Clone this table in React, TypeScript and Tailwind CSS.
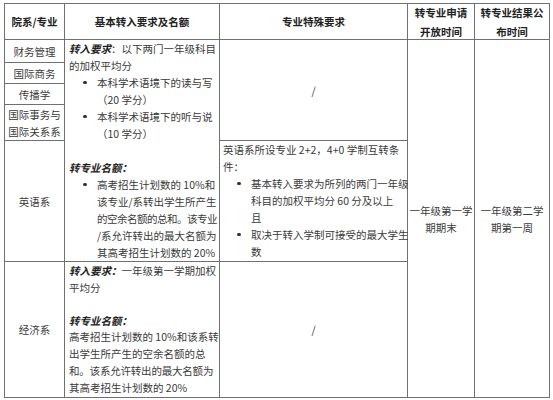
import React from "react";

const B = ({ children }: { children: React.ReactNode }) => (
  <span className="font-bold italic text-[#222]">{children}</span>
);

const L = ({ children, className = "" }: { children: React.ReactNode; className?: string }) => (
  <div className={`whitespace-nowrap h-[17px] ${className}`}>{children}</div>
);

const Bullet = ({ lines }: { lines: React.ReactNode[] }) => (
  <div className="flex pl-[11px]">
    <span className="w-[17px] shrink-0 h-[17px] flex items-center">
      <span className="ml-[3px] w-[3.5px] h-[3.5px] rounded-full bg-[#333]" />
    </span>
    <div>
      {lines.map((l, i) => (
        <L key={i}>{l}</L>
      ))}
    </div>
  </div>
);

const C = "bg-white";
const center = "bg-white flex items-center justify-center text-center";

export default function App() {
  return (
    <div
      className="w-[553px] h-[400px] bg-white pt-[3px] pl-[4px] text-[10.5px] leading-[17px] text-[#3a3a3a]"
      style={{ fontFamily: '"Noto Sans CJK SC", "Liberation Sans", sans-serif' }}
    >
      <div className="grid w-[546px] grid-cols-[59px_154px_187px_66px_74px] grid-rows-[35px_22px_20px_20px_35px_120px_135px] gap-[1px] border border-[#707070] bg-[#707070]">
        {/* header */}
        <div className={`${center} font-bold text-[#222]`}>院系/专业</div>
        <div className={`${center} font-bold text-[#222]`}>基本转入要求及名额</div>
        <div className={`${center} font-bold text-[#222]`}>专业特殊要求</div>
        <div className={`${center} font-bold text-[#222] leading-[19px]`}>
          <div>
            转专业申请
            <br />
            开放时间
          </div>
        </div>
        <div className={`${center} font-bold text-[#222] leading-[19px]`}>
          <div>
            转专业结果公
            <br />
            布时间
          </div>
        </div>

        {/* col1 */}
        <div className={`${center} col-start-1 row-start-2`}>财务管理</div>
        <div className={`${center} col-start-1 row-start-3`}>国际商务</div>
        <div className={`${center} col-start-1 row-start-4`}>传播学</div>
        <div className={`${center} col-start-1 row-start-5`}>
          <div>
            国际事务与
            <br />
            国际关系系
          </div>
        </div>
        <div className={`${center} col-start-1 row-start-6`}>英语系</div>
        <div className={`${center} col-start-1 row-start-7`}>经济系</div>

        {/* col2 top */}
        <div className={`${C} col-start-2 row-start-2 row-span-5 pl-[4px]`}>
          <L>
            <B>转入要求</B>：以下两门一年级科目
          </L>
          <L>的加权平均分</L>
          <Bullet lines={["本科学术语境下的读与写", "（20 学分）"]} />
          <Bullet lines={["本科学术语境下的听与说", "（10 学分）"]} />
          <L>&nbsp;</L>
          <L>
            <B>转专业名额：</B>
          </L>
          <Bullet
            lines={[
              "高考招生计划数的 10%和",
              "该专业/系转出学生所产生",
              <span className="tracking-[-0.5px]">的空余名额的总和。该专业</span>,
              "/系允许转出的最大名额为",
              "其高考招生计划数的 20%",
            ]}
          />
        </div>

        {/* col3 */}
        <div className={`${center} col-start-3 row-start-2 row-span-4`}>/</div>
        <div className={`${C} col-start-3 row-start-6 pl-[3px]`}>
          <L>英语系所设专业 2+2，4+0 学制互转条</L>
          <L>件：</L>
          <Bullet lines={["基本转入要求为所列的两门一年级", "科目的加权平均分 60 分及以上", "且"]} />
          <Bullet lines={["取决于转入学制可接受的最大学生", "数"]} />
        </div>

        {/* col4, col5 */}
        <div className={`${center} col-start-4 row-start-2 row-span-6`}>
          <div>
            一年级第一学
            <br />
            期期末
          </div>
        </div>
        <div className={`${center} col-start-5 row-start-2 row-span-6`}>
          <div>
            一年级第二学
            <br />
            期第一周
          </div>
        </div>

        {/* row F */}
        <div className={`${C} col-start-2 row-start-7 pl-[4px]`}>
          <L>
            <B>转入要求：</B>一年级第一学期加权
          </L>
          <L>平均分</L>
          <L className="!h-[16px]">&nbsp;</L>
          <L className="!h-[16px]">
            <B>转专业名额：</B>
          </L>
          <L>高考招生计划数的 10%和该系转</L>
          <L>出学生所产生的空余名额的总</L>
          <L className="tracking-[-0.2px]">和。该系允许转出的最大名额为</L>
          <L>其高考招生计划数的 20%</L>
        </div>
        <div className={`${center} col-start-3 row-start-7`}>/</div>
      </div>
    </div>
  );
}
